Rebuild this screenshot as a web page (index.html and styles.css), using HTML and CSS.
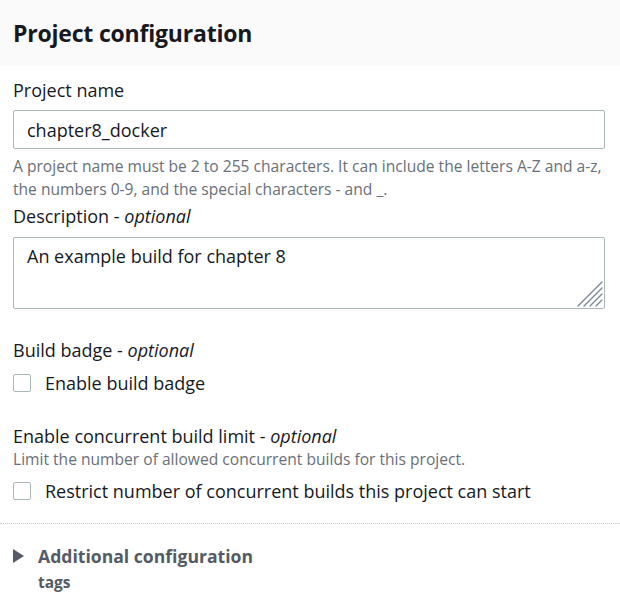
FILE: index.html
```html
<!DOCTYPE html>
<html>
<head>
<meta charset="utf-8">
<link rel="stylesheet" href="styles.css">
</head>
<body>
<div class="panel">
  <div class="panel-header"><h2 class="panel-title">Project configuration</h2></div>
  <div class="panel-body">
    <div class="field">
      <label class="label">Project name</label>
      <div class="input">chapter8_docker</div>
      <div class="hint">A project name must be 2 to 255 characters. It can include the letters A-Z and a-z, the numbers 0-9, and the special characters - and _.</div>
    </div>
    <div class="field field-desc">
      <label class="label">Description - <i>optional</i></label>
      <div class="textarea">An example build for chapter 8
        <svg class="grip" width="26" height="26" viewBox="0 0 26 26"><g stroke="#7d8998" stroke-width="1.4" stroke-linecap="round"><line x1="1" y1="25" x2="25" y2="1"/><line x1="7" y1="25" x2="25" y2="7"/><line x1="13" y1="25" x2="25" y2="13"/><line x1="19" y1="25" x2="25" y2="19"/></g></svg>
      </div>
    </div>
    <div class="field field-badge">
      <label class="label">Build badge - <i>optional</i></label>
      <div class="check check-badge"><span class="box"></span><span>Enable build badge</span></div>
    </div>
    <div class="field field-limit">
      <label class="label">Enable concurrent build limit - <i>optional</i></label>
      <div class="hint hint-tight">Limit the number of allowed concurrent builds for this project.</div>
      <div class="check check-limit"><span class="box"></span><span>Restrict number of concurrent builds this project can start</span></div>
    </div>
  </div>
  <div class="divider"></div>
  <div class="expander">
    <span class="caret"></span>
    <div>
      <div class="exp-title">Additional configuration</div>
      <div class="exp-sub">tags</div>
    </div>
  </div>
</div>
</body>
</html>
```
FILE: styles.css
```css
* { box-sizing: border-box; }
body {
  margin: 0;
  background: #fff;
  font-family: "Open Sans", "Noto Sans", sans-serif;
  color: #16191f;
}
.panel { width: 620px; }
.panel-header {
  background: #fafafa;
  height: 66px;
  display: flex;
  align-items: center;
  padding: 0 13px;
}
.panel-title {
  margin: 0;
  font-size: 23px;
  font-weight: 700;
  letter-spacing: -0.2px;
}
.panel-body {
  padding: 12px 15px 0 13px;
}
.label {
  display: block;
  font-size: 18px;
  line-height: 24px;
}
.label i { font-style: italic; }
.input {
  margin-top: 8px;
  height: 39px;
  border: 1px solid #aab7b8;
  border-radius: 2px;
  padding: 0 13px;
  display: flex;
  align-items: center;
  font-size: 18px;
}
.hint {
  margin-top: 6px;
  margin-right: -12px;
  font-size: 15.6px;
  line-height: 23px;
  color: #687078;
}
.field-desc { margin-top: 3px; }
.textarea {
  position: relative;
  margin-top: 9px;
  height: 72px;
  border: 1px solid #aab7b8;
  border-radius: 2px;
  padding: 6px 13px;
  font-size: 18px;
  line-height: 24px;
}
.grip { position: absolute; right: 1px; bottom: 1px; }
.field-badge { margin-top: 29px; }
.check {
  display: flex;
  align-items: center;
  gap: 14px;
  font-size: 18px;
  line-height: 24px;
}
.check-badge { margin-top: 9px; }
.check-limit { margin-top: 10px; }
.box {
  width: 18px;
  height: 18px;
  border: 1px solid #aab7b8;
  border-radius: 2px;
  flex: none;
}
.field-limit { margin-top: 29px; }
.hint-tight { margin-top: 1px; line-height: 20px; }
.divider {
  margin-top: 20px;
  border-top: 1px dotted #c6cccd;
}
.expander {
  display: flex;
  gap: 14px;
  padding: 21px 13px 0;
}
.caret {
  width: 0; height: 0;
  margin-top: 4px;
  border-top: 7px solid transparent;
  border-bottom: 7px solid transparent;
  border-left: 11px solid #545b64;
}
.exp-title {
  font-size: 17.6px;
  font-weight: 700;
  line-height: 22px;
  color: #545b64;
}
.exp-sub {
  margin-top: 5px;
  font-size: 15.5px;
  font-weight: 700;
  line-height: 20px;
  color: #545b64;
}
```
